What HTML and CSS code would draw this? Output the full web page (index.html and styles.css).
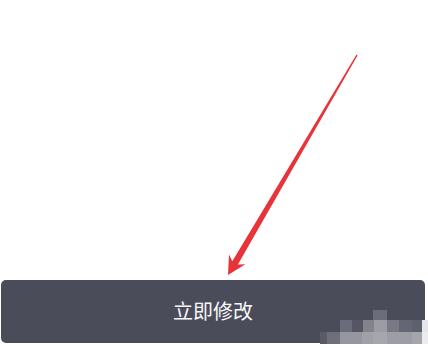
FILE: index.html
```html
<!DOCTYPE html>
<html lang="zh-CN">
<head>
<meta charset="utf-8">
<title>立即修改</title>
<link rel="stylesheet" href="styles.css">
</head>
<body>
<div class="page">
  <div class="spacer"></div>
  <button class="submit" type="button">立即修改</button>
  <svg class="arrow" width="428" height="348" viewBox="0 0 428 348" aria-hidden="true">
    <polygon fill="#e9333b" points="356.5,54.6 232.3,261.3 229.0,254.6 228,275 245.3,264.3 237.9,264.5 357.5,55.4"/>
  </svg>
  <div class="mosaic" aria-hidden="true">
    <div class="m-row m-a">
      <span class="c" style="width:33px;background:transparent"></span>
      <span class="c" style="width:14px;background:#6c6d79"></span>
    </div>
    <div class="m-row m-b">
      <span class="c" style="width:12px;background:#6b6c79"></span>
      <span class="c" style="width:11px;background:#555664"></span>
      <span class="c" style="width:11px;background:#82838d"></span>
      <span class="c" style="width:13px;background:#9c9ca4"></span>
      <span class="c" style="width:12px;background:#787985"></span>
      <span class="c" style="width:13px;background:#656674"></span>
      <span class="c" style="width:10px;background:#5f606e"></span>
      <span class="c" style="width:6px;background:#e6e6ea"></span>
    </div>
    <div class="m-row m-c">
      <span class="c" style="width:7px;background:#5a5b66"></span>
      <span class="c" style="width:13px;background:#6e6f79"></span>
      <span class="c" style="width:22px;background:#9596a0"></span>
      <span class="c" style="width:11px;background:#9fa0a8"></span>
      <span class="c" style="width:14px;background:#a6a6ad"></span>
      <span class="c" style="width:25px;background:#9d9da5"></span>
      <span class="c" style="width:10px;background:#a5a5ac"></span>
      <span class="c" style="width:6px;background:#ececef"></span>
    </div>
  </div>
</div>
</body>
</html>
```

FILE: styles.css
```css
html, body {
  margin: 0;
  padding: 0;
  background: #ffffff;
}

.page {
  position: relative;
  width: 428px;
  height: 348px;
  display: flex;
  flex-direction: column;
  overflow: hidden;
  font-family: "Noto Sans CJK SC", "Noto Sans", sans-serif;
}

.spacer {
  flex: 1;
}

.submit {
  margin: 0 3px 5px 1px;
  height: 63px;
  border: none;
  border-radius: 5px;
  background: #4b4c5a;
  color: #f7f7f9;
  font-family: "Noto Sans CJK SC", "Noto Sans", sans-serif;
  font-size: 20px;
  padding: 0 0 2px 0;
  display: flex;
  align-items: center;
  justify-content: center;
}

.arrow {
  position: absolute;
  left: 0;
  top: 0;
  pointer-events: none;
}

.mosaic {
  position: absolute;
  left: 320px;
  top: 310px;
  width: 108px;
  display: flex;
  flex-direction: column;
  pointer-events: none;
}

.m-row {
  display: flex;
}

.m-a {
  height: 10px;
  padding-left: 20px;
}

.m-b {
  height: 12px;
  padding-left: 20px;
}

.m-c {
  height: 12px;
}

.c {
  display: block;
  height: 100%;
}
```
